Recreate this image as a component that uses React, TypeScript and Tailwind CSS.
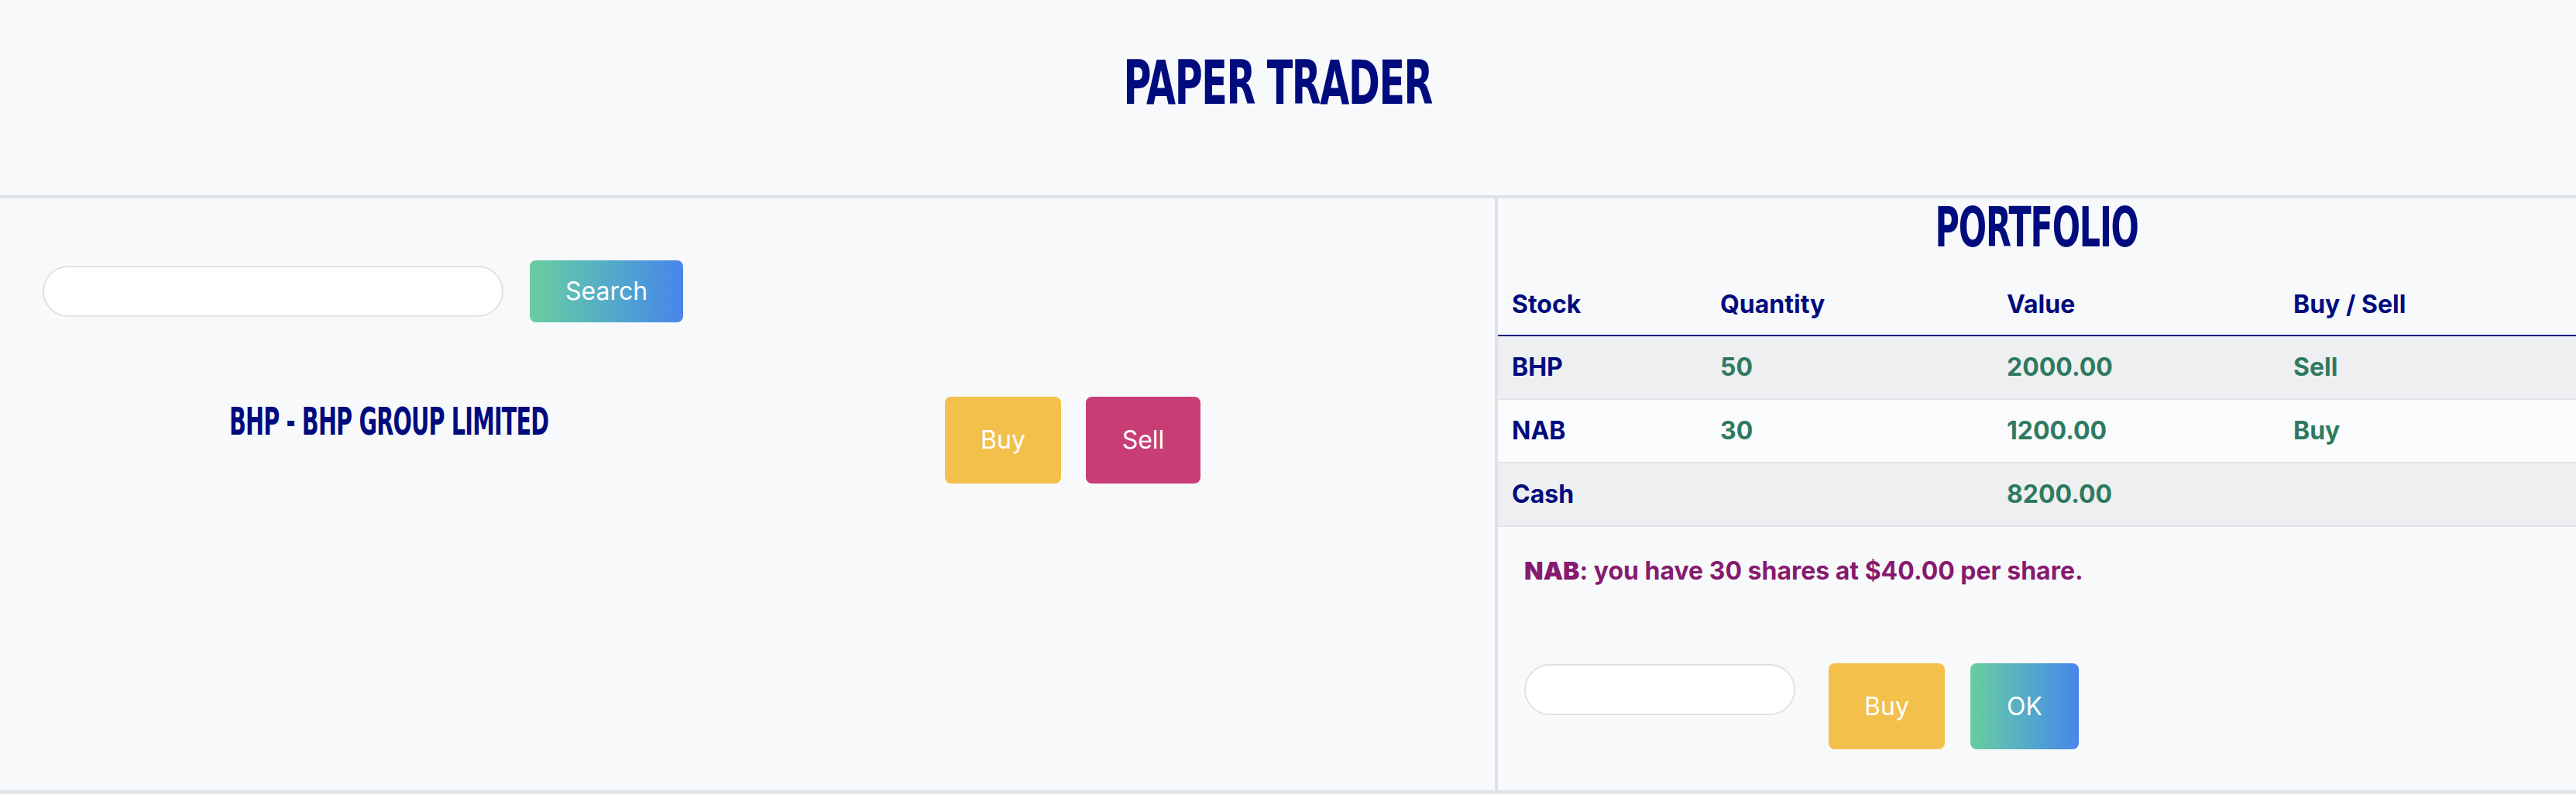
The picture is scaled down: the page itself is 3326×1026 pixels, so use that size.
const holdings = [
  { stock: "BHP", quantity: "50", value: "2000.00", action: "Sell", shaded: true },
  { stock: "NAB", quantity: "30", value: "1200.00", action: "Buy", shaded: false },
  { stock: "Cash", quantity: "", value: "8200.00", action: "", shaded: true },
];

const display = "font-['Liberation_Sans_Narrow','DejaVu_Sans_Condensed',sans-serif] font-bold text-[#000c7d] leading-none tracking-tight";

function StockSearch() {
  return (
    <section className="h-full w-[1934px] border-r-4 border-[#dee2e6] pt-[80px]">
      <form className="flex items-center gap-[34px] pl-[55px]" onSubmit={(e) => e.preventDefault()}>
        <input
          type="text"
          className="h-[66px] w-[595px] rounded-full border-2 border-[#dee2e6] bg-white px-6 text-[28px] outline-none"
        />
        <button
          type="submit"
          className="h-[80px] w-[198px] rounded-lg bg-gradient-to-r from-[#6acd9d] to-[#4a85ea] text-[32px] text-white"
        >
          Search
        </button>
      </form>

      <div className="mt-[96px] flex items-start">
        <div className="mt-[8px] flex w-[1004px] justify-center">
          <h2 className={`${display} text-[49px] scale-x-[0.65]`}>BHP - BHP GROUP LIMITED</h2>
        </div>
        <div className="ml-[216px] flex gap-[32px]">
          <button type="button" className="h-[112px] w-[150px] rounded-lg bg-[#f2c04b] text-[32px] text-white">
            Buy
          </button>
          <button type="button" className="h-[112px] w-[148px] rounded-lg bg-[#c93d75] text-[32px] text-white">
            Sell
          </button>
        </div>
      </div>
    </section>
  );
}

function Portfolio() {
  const cols = "grid grid-cols-[269px_370px_370px_1fr] items-center pl-[18px] text-[32px] font-bold leading-none";
  return (
    <section className="h-full flex-1">
      <div className="flex h-[98px] justify-center pt-[2px]">
        <h2 className={`${display} text-[71px] scale-x-[0.67]`}>PORTFOLIO</h2>
      </div>

      <div className={`${cols} h-[80px] border-b-2 border-[#000c7d] text-[#000c7d]`}>
        <span>Stock</span>
        <span>Quantity</span>
        <span>Value</span>
        <span>Buy / Sell</span>
      </div>
      {holdings.map((h) => (
        <div
          key={h.stock}
          className={`${cols} h-[82px] border-b-2 border-[#e2e3e7] text-[#2e7a60] ${h.shaded ? "bg-[#eeeff1]" : "bg-[#fafbfc]"}`}
        >
          <span className="text-[#000c7d]">{h.stock}</span>
          <span>{h.quantity}</span>
          <span>{h.value}</span>
          <span>{h.action}</span>
        </div>
      ))}

      <p className="mt-[33px] pl-[34px] text-[32px] font-bold leading-[48px] text-[#871a6e]">
        <strong className="font-black">NAB</strong>: you have 30 shares at $40.00 per share.
      </p>

      <form className="mt-[95px] flex items-start pl-[34px]" onSubmit={(e) => e.preventDefault()}>
        <input
          type="text"
          className="mt-[1px] h-[66px] w-[350px] rounded-full border-2 border-[#dee2e6] bg-white px-6 text-[28px] outline-none"
        />
        <button type="button" className="ml-[43px] h-[111px] w-[150px] rounded-lg bg-[#f2c04b] text-[32px] text-white">
          Buy
        </button>
        <button
          type="submit"
          className="ml-[33px] h-[111px] w-[140px] rounded-lg bg-gradient-to-r from-[#6acd9d] to-[#4a85ea] text-[32px] text-white"
        >
          OK
        </button>
      </form>
    </section>
  );
}

export default function App() {
  return (
    <div className="min-h-[1026px] w-full bg-[#f8f9fb] font-['Inter',sans-serif]">
      <header className="flex h-[256px] justify-center border-b-4 border-[#dee2e6] pt-[68px] pr-[26px]">
        <h1 className={`${display} text-[78px] scale-x-[0.70]`}>PAPER TRADER</h1>
      </header>
      <main className="flex h-[768px] border-b-4 border-[#dee2e6]">
        <StockSearch />
        <Portfolio />
      </main>
    </div>
  );
}
